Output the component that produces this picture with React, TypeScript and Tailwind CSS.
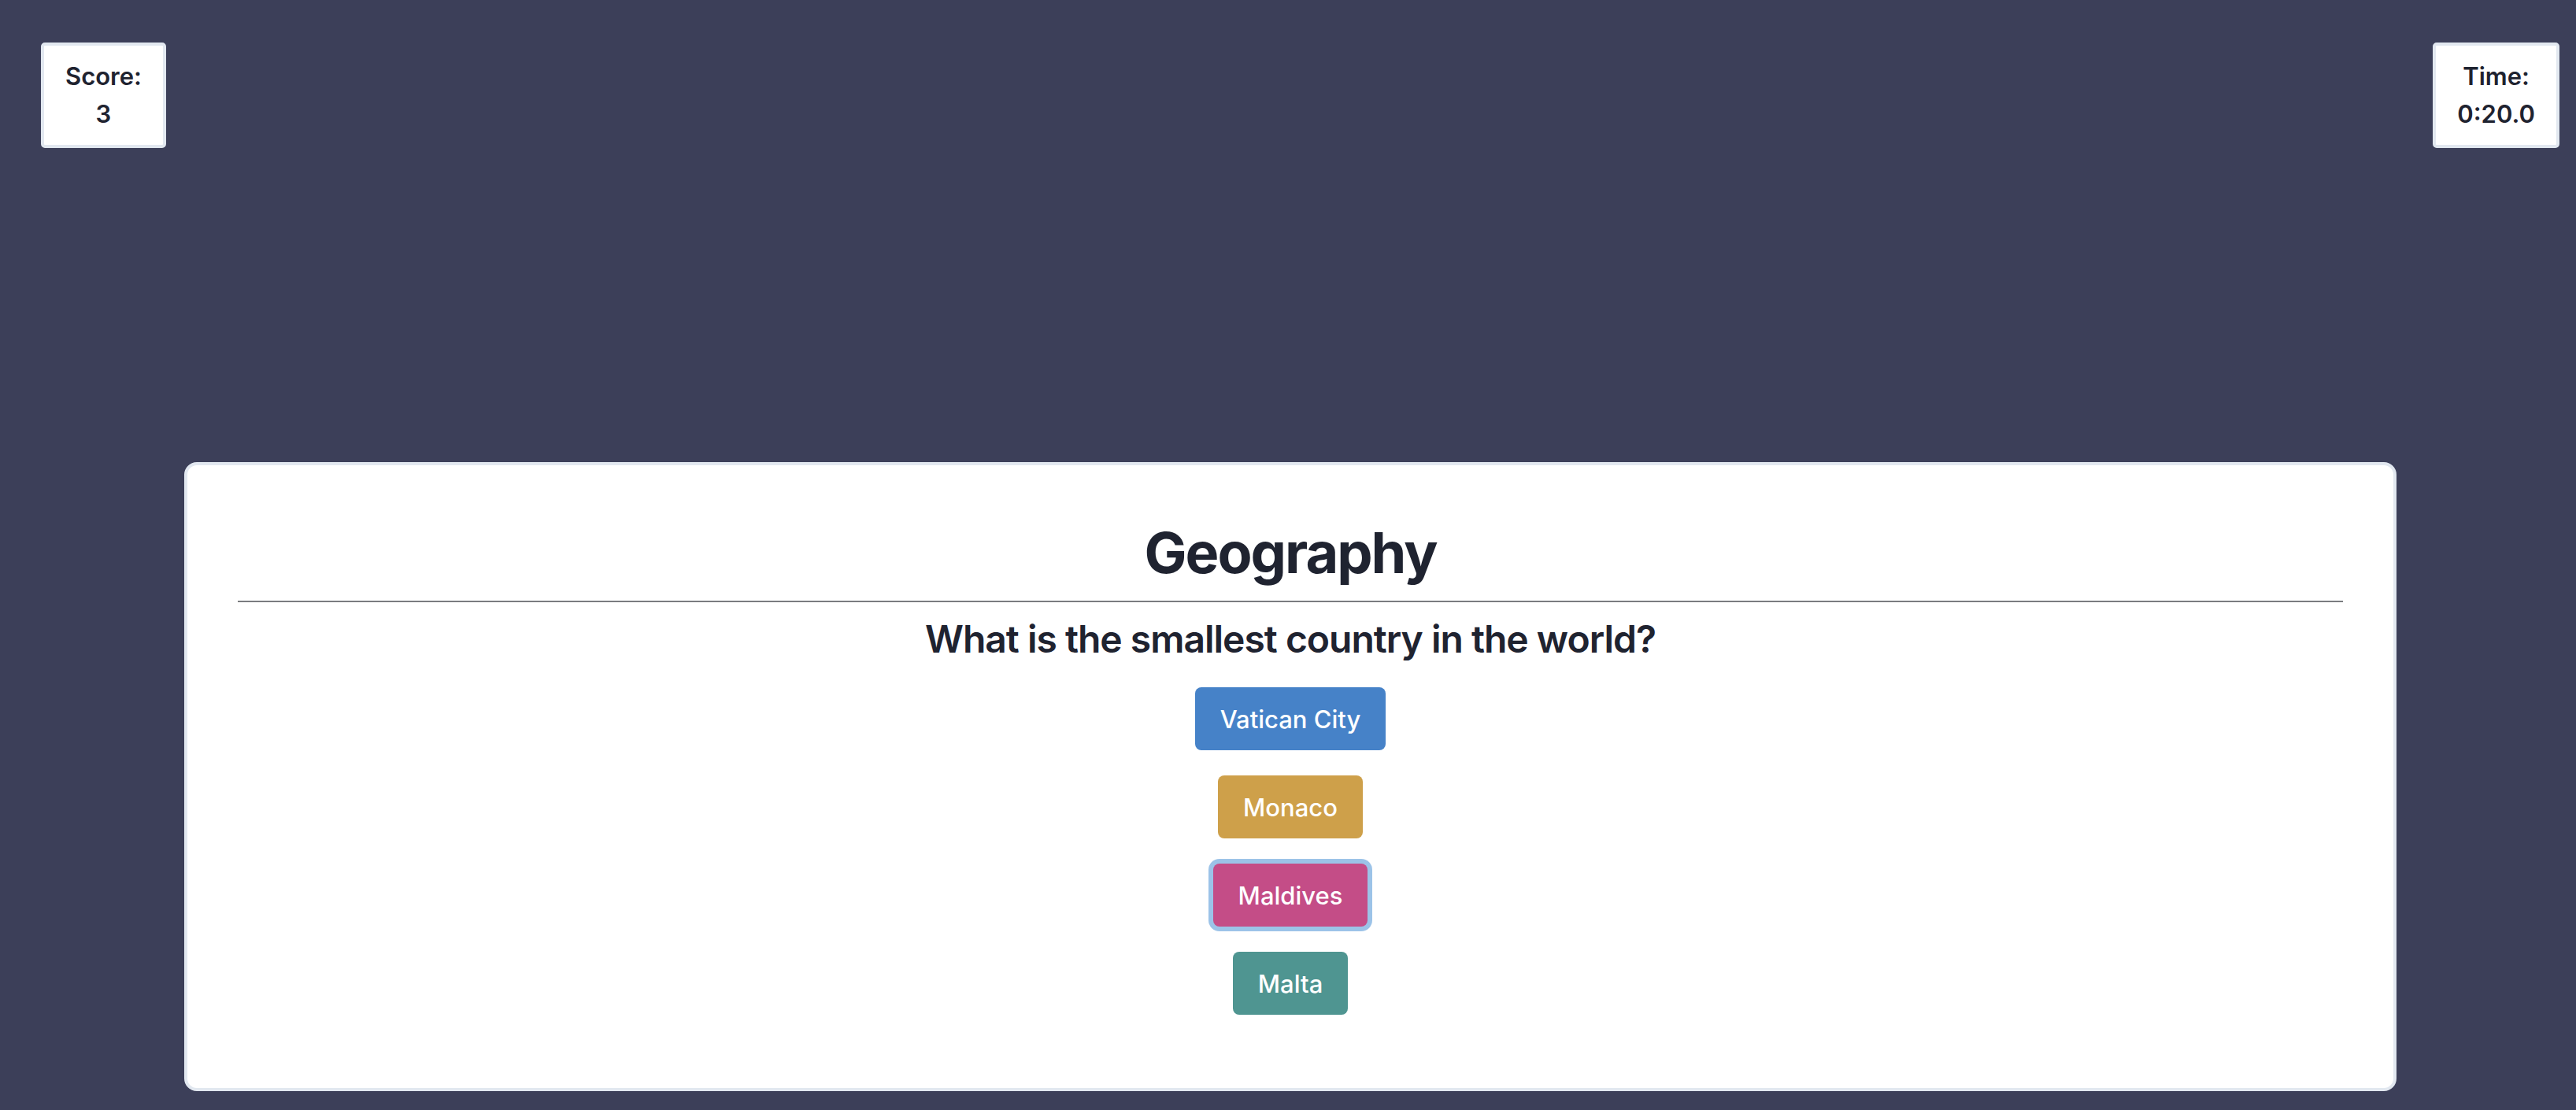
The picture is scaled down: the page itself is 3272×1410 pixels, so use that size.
import React from "react";

const answers = [
  { label: "Vatican City", cls: "bg-[#4682c8]" },
  { label: "Monaco", cls: "bg-[#cea04a]" },
  { label: "Maldives", cls: "bg-[#c44d87] ring-[6px] ring-[#9cc3e8]" },
  { label: "Malta", cls: "bg-[#4f9591]" },
];

function StatBox({ title, value }: { title: string; value: string }) {
  return (
    <div className="bg-white border-4 border-[#e2e8f0] rounded-[5px] px-[27px] py-[15px] text-center font-semibold text-[31px] leading-[48px] text-[#1f2330]">
      <div>{title}</div>
      <div>{value}</div>
    </div>
  );
}

export default function App() {
  return (
    <div
      className="min-h-[1410px] w-full bg-[#3c3f59] flex flex-col"
      style={{ fontFamily: "Inter, 'Noto Sans', sans-serif" }}
    >
      <div className="flex justify-between items-start pl-[52px] pr-[21px] pt-[54px]">
        <StatBox title="Score:" value="3" />
        <StatBox title="Time:" value="0:20.0" />
      </div>
      <div className="ml-[234px] mr-[228px] mt-[399px] h-[799px] bg-white border-4 border-[#e2e8f0] rounded-[16px] px-16 pt-[75px] flex flex-col items-center">
        <h1 className="text-[72px] leading-none font-bold text-[#1f2330] tracking-[-2px]">Geography</h1>
        <div className="w-full h-[2px] bg-[#7a7c80] mt-[25px]" />
        <h2 className="mt-[23px] text-[48px] leading-none font-semibold text-[#1f2330] tracking-[-1px]">
          What is the smallest country in the world?
        </h2>
        <div className="mt-[37px] flex flex-col items-center gap-[32px]">
          {answers.map((a) => (
            <button
              key={a.label}
              className={`${a.cls} h-[80px] px-8 rounded-[8px] text-white text-[31px] font-medium leading-none`}
            >
              {a.label}
            </button>
          ))}
        </div>
      </div>
    </div>
  );
}
